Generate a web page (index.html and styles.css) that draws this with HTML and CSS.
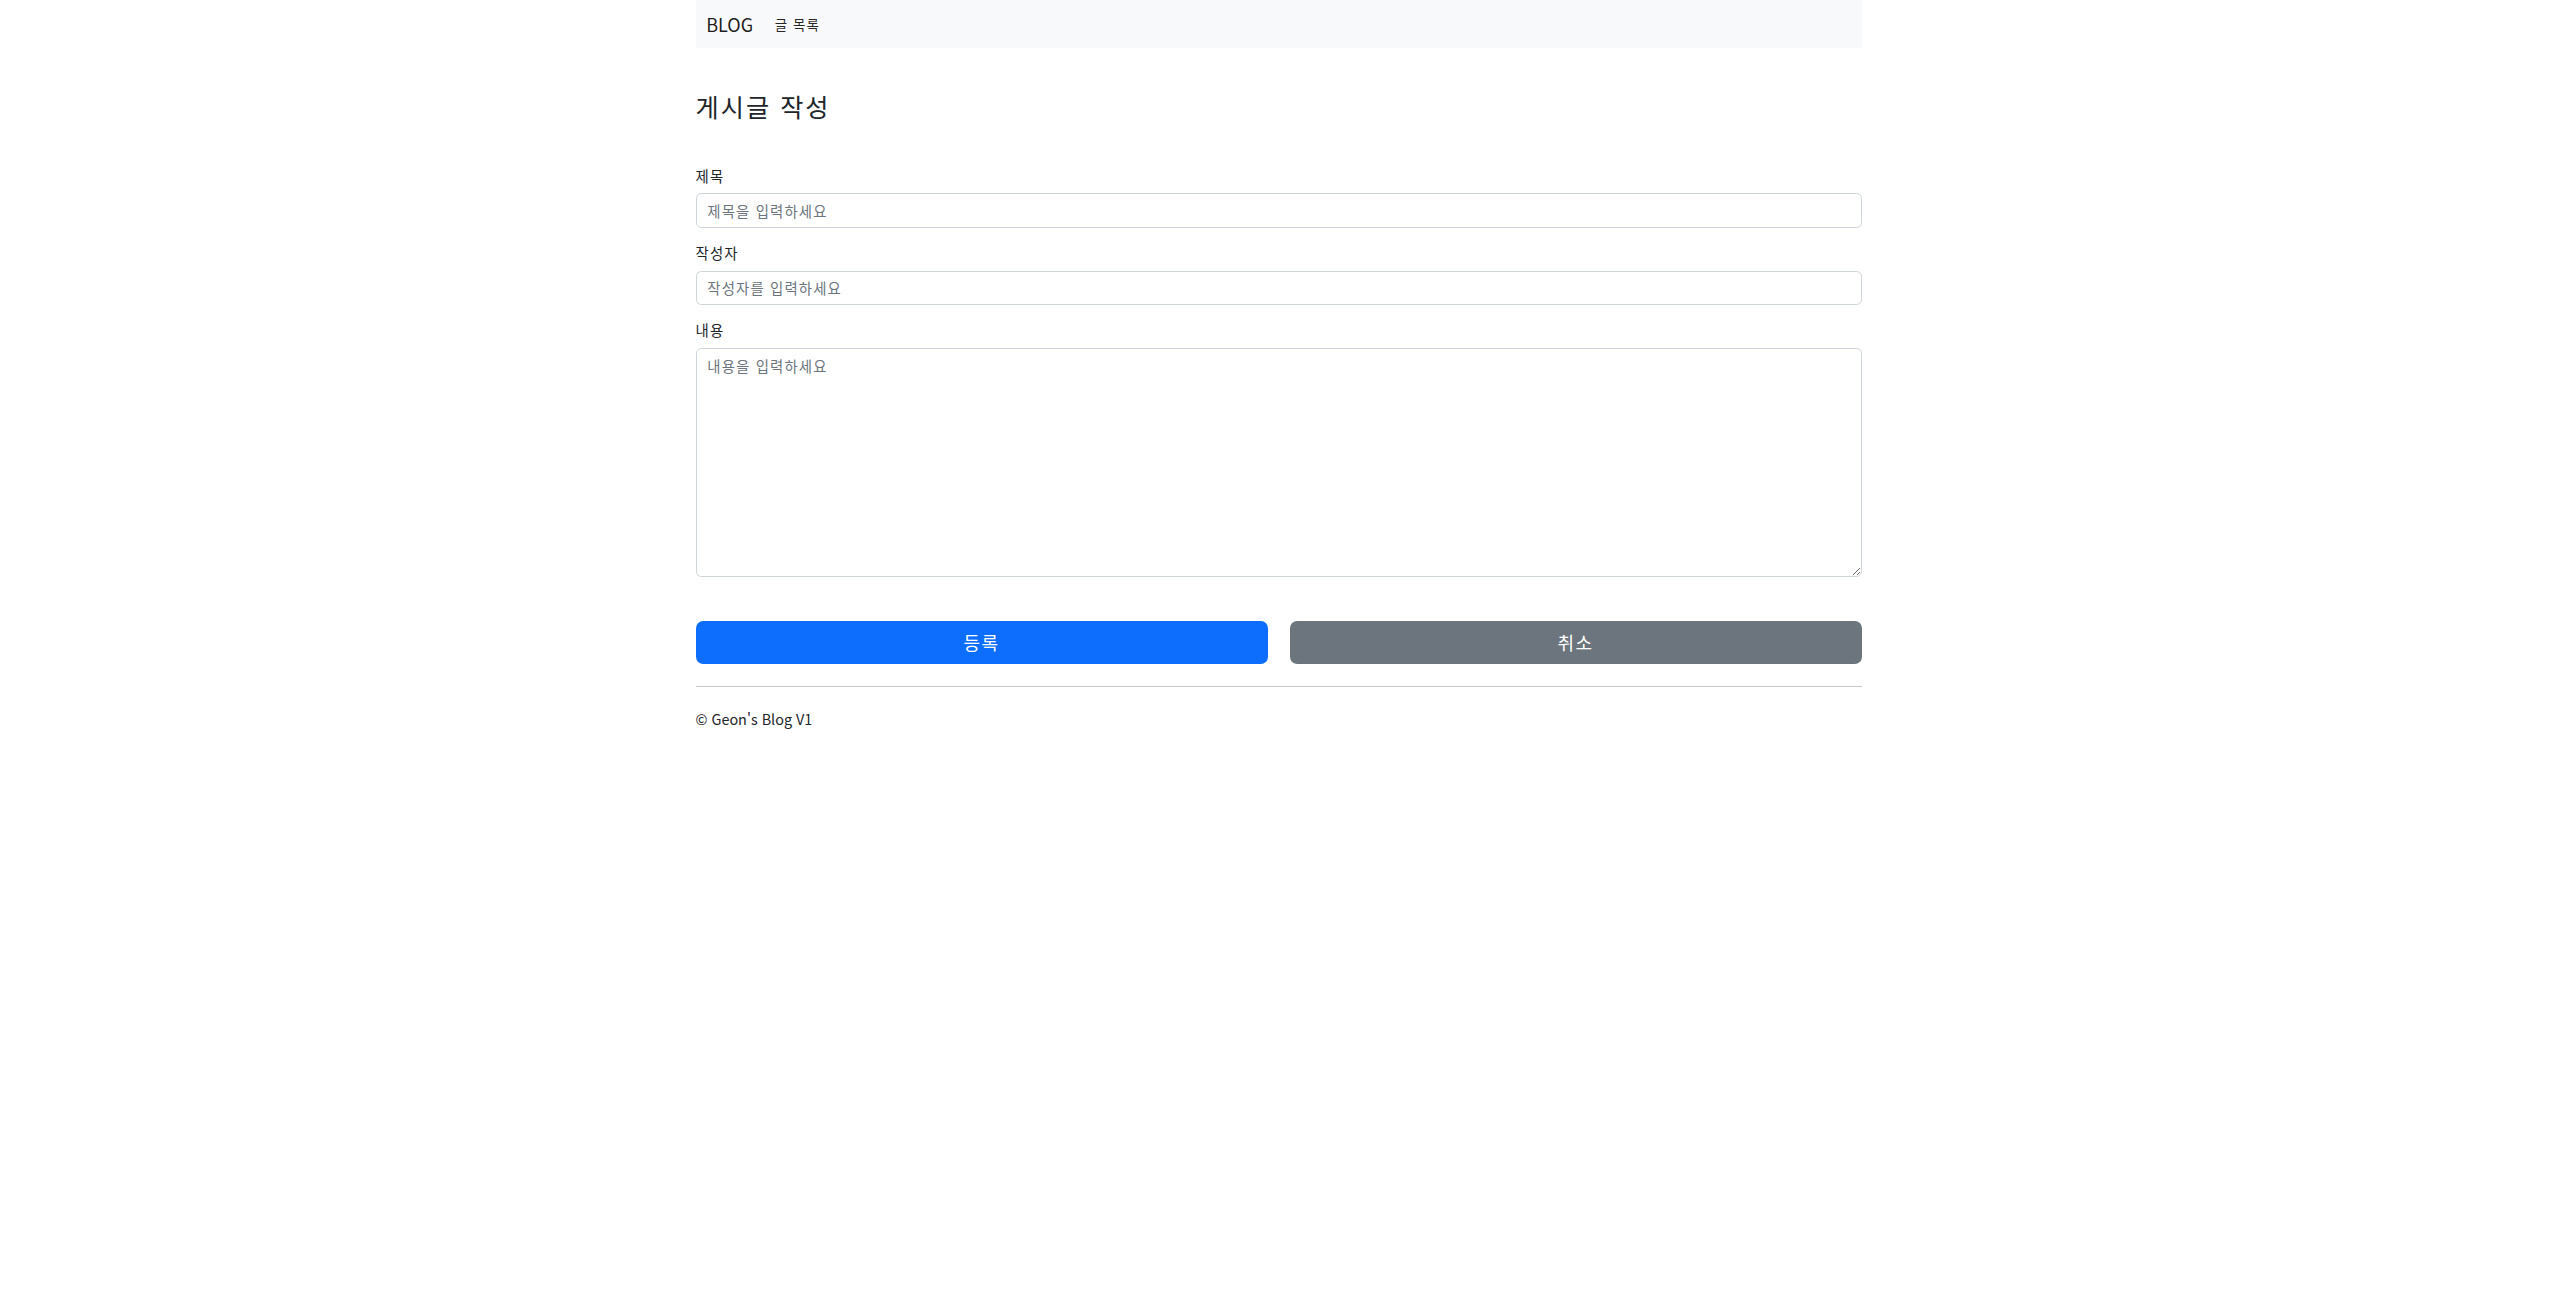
FILE: index.html
```html
<!DOCTYPE html>
<html lang="ko">
<head>
<meta charset="utf-8">
<title>게시글 작성</title>
<link rel="stylesheet" href="styles.css">
</head>
<body>
<div class="container">
  <nav class="navbar">
    <a class="brand" href="#">BLOG</a>
    <a class="nav-link ko" href="#">글 목록</a>
  </nav>

  <h3 class="title ko">게시글 작성</h3>

  <form class="post-form">
    <div class="field">
      <label class="label ko" for="title">제목</label>
      <input class="control ko" id="title" type="text" placeholder="제목을 입력하세요">
    </div>
    <div class="field">
      <label class="label ko" for="author">작성자</label>
      <input class="control ko" id="author" type="text" placeholder="작성자를 입력하세요">
    </div>
    <div class="field">
      <label class="label ko" for="content">내용</label>
      <textarea class="control textarea ko" id="content" placeholder="내용을 입력하세요"></textarea>
    </div>

    <div class="actions">
      <button type="submit" class="btn btn-primary ko">등록</button>
      <button type="button" class="btn btn-secondary ko">취소</button>
    </div>
  </form>

  <hr class="divider">
  <footer class="footer">© Geon's Blog V1</footer>
</div>
</body>
</html>
```

FILE: styles.css
```css
* { box-sizing: border-box; }

html, body {
  margin: 0;
  padding: 0;
  background: #fff;
}

body {
  font-family: "Noto Sans CJK KR", "Noto Sans", sans-serif;
  font-size: 14.4px;
  line-height: 1.5;
  color: #212529;
}

.ko { letter-spacing: 0.08em; }

.container {
  width: 1166px;
  margin: 0 auto;
}

.navbar {
  height: 48px;
  background: #f8f9fa;
  display: flex;
  align-items: center;
  padding: 0 10.8px;
}

.brand {
  font-size: 18px;
  line-height: 27px;
  color: rgba(0, 0, 0, 0.9);
  text-decoration: none;
  margin-right: 14.4px;
}

.nav-link {
  font-size: 13.5px;
  padding: 0 7.2px;
  color: rgba(0, 0, 0, 0.85);
  text-decoration: none;
}

.title {
  font-size: 25.2px;
  line-height: 1.2;
  font-weight: 400;
  margin: 43.2px 0 43.2px;
}

.post-form { margin: 0; }

.field { margin-bottom: 14.4px; }

.label {
  display: block;
  margin-bottom: 7.2px;
  font-size: 14.4px;
  line-height: 21.6px;
}

.control {
  display: block;
  width: 100%;
  height: 34.2px;
  padding: 5.4px 10.8px;
  font-family: inherit;
  font-size: 14.4px;
  line-height: 21.6px;
  color: #212529;
  background: #fff;
  border: 1px solid #ced4da;
  border-radius: 5.4px;
  outline: none;
}

.control::placeholder { color: #6c757d; opacity: 1; }

.textarea {
  height: 228.8px;
  resize: vertical;
}

.actions {
  display: grid;
  grid-template-columns: 1fr 1fr;
  column-gap: 22px;
  margin-top: 44px;
}

.btn {
  height: 43.2px;
  border: none;
  border-radius: 7.2px;
  font-family: inherit;
  font-size: 18px;
  line-height: 27px;
  color: #fff;
  cursor: pointer;
}

.btn-primary { background: #0d6efd; }
.btn-secondary { background: #6c757d; }

.divider {
  margin: 21.6px 0;
  border: 0;
  border-top: 1px solid rgba(33, 37, 41, 0.25);
  height: 0;
}

.footer {
  font-size: 14.4px;
  line-height: 21.6px;
  color: #212529;
}
```
